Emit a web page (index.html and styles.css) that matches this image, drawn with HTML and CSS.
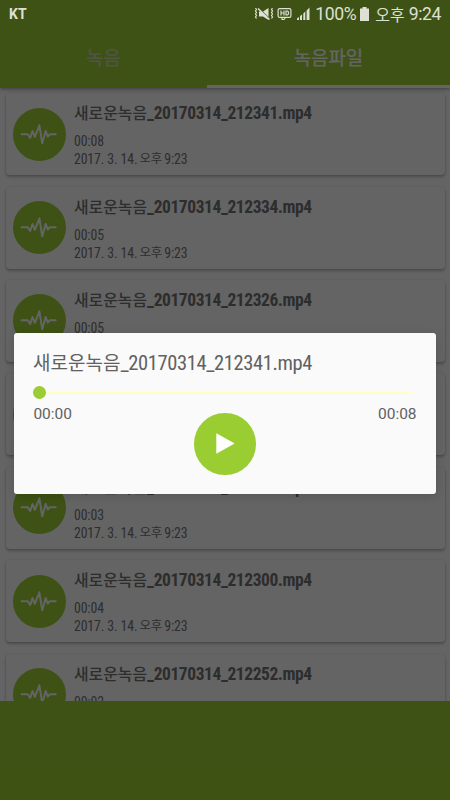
FILE: index.html
```
<!DOCTYPE html>
<html lang="ko">
<head>
<meta charset="utf-8">
<meta name="viewport" content="width=device-width">
<title>녹음파일</title>
<link rel="stylesheet" href="styles.css">
</head>
<body>
<svg class="defs" aria-hidden="true">
  <symbol id="wave" viewBox="0 0 53 53"><path d="M8.500 26.300h6.200l2.500 3.700 2.300-7 2.300 5.800 4.600-11.500 2.800 18 3.500-12.300 2 5.500 2.200-2.200h5.800" fill="none" stroke="currentColor" stroke-width="2" stroke-linejoin="round" stroke-linecap="round"/></symbol>
</svg>
<div class="screen">
  <header class="header">
    <nav class="tabs">
      <div class="tab">녹음</div>
      <div class="tab active">녹음파일</div>
    </nav>
  </header>
  <main class="list">
    <article class="card"><div class="disc"><svg><use href="#wave"/></svg></div><div class="info"><h2>새로운녹음<span class="latin">_20170314_212341.mp4</span></h2><p class="time"><span class="latin">00:08</span></p><p class="date"><span class="latin">2017. 3. 14.</span><span class="ko">오후</span><span class="latin">9:23</span></p></div></article>
    <article class="card"><div class="disc"><svg><use href="#wave"/></svg></div><div class="info"><h2>새로운녹음<span class="latin">_20170314_212334.mp4</span></h2><p class="time"><span class="latin">00:05</span></p><p class="date"><span class="latin">2017. 3. 14.</span><span class="ko">오후</span><span class="latin">9:23</span></p></div></article>
    <article class="card"><div class="disc"><svg><use href="#wave"/></svg></div><div class="info"><h2>새로운녹음<span class="latin">_20170314_212326.mp4</span></h2><p class="time"><span class="latin">00:05</span></p></div></article>
    <article class="card"><div class="disc"><svg><use href="#wave"/></svg></div><div class="info"></div></article>
    <article class="card"><div class="disc"><svg><use href="#wave"/></svg></div><div class="info"><h2>새로운녹음<span class="latin">_20170314_212309.mp4</span></h2><p class="time"><span class="latin">00:03</span></p><p class="date"><span class="latin">2017. 3. 14.</span><span class="ko">오후</span><span class="latin">9:23</span></p></div></article>
    <article class="card"><div class="disc"><svg><use href="#wave"/></svg></div><div class="info"><h2>새로운녹음<span class="latin">_20170314_212300.mp4</span></h2><p class="time"><span class="latin">00:04</span></p><p class="date"><span class="latin">2017. 3. 14.</span><span class="ko">오후</span><span class="latin">9:23</span></p></div></article>
    <article class="card"><div class="disc"><svg><use href="#wave"/></svg></div><div class="info"><h2>새로운녹음<span class="latin">_20170314_212252.mp4</span></h2><p class="time"><span class="latin">00:02</span></p></div></article>
  </main>
  <footer class="footer"></footer>
</div>
<div class="scrim"></div>
<div class="status">
  <span class="carrier">KT</span>
  <svg class="icons" viewBox="0 0 58 16">
    <g fill="none" stroke="currentColor" stroke-width="1.200">
      <path d="M1.500 2l1 1.500-1 1.500 1 1.500-1 1.500 1 1.500-1 1.500 1 1.500M18.500 2l-1 1.500 1 1.500-1 1.500 1 1.500-1 1.500 1 1.500-1 1.500"/>
      <path d="M4 2.500l11.500 11" stroke-width="1.500"/>
      <rect x="24.100" y="2.600" width="12.800" height="8.800" rx="1.500"/>
      <path d="M27 4.500v5M27 7h3M30 4.500v5M32 5v4h1.500l1-1V6l-1-1z"/>
      <path d="M28 11.500v2h2l1.500-2"/>
    </g>
    <path d="M5 5.500h2.500l7 7v1.500L9 10.500H5zM9 5.500L14.500 2v9z" fill="currentColor"/>
    <path d="M43 14v-1.500l2-1.500v3zM46 14v-4l2-1.500V14zM49.300 14V7.500l2-2V14zM52.600 14V4.500L55.500 1.500V14z" fill="currentColor"/>
  </svg>
  <span class="percent">100%</span>
  <svg class="battery" viewBox="0 0 9 14"><path d="M2.500 0h4v1.500H9V14H0V1.500h2.500z" fill="currentColor"/></svg>
  <span class="meridiem">오후</span>
  <span class="clock">9:24</span>
</div>
<section class="dialog">
  <h1>새로운녹음<span class="latin">_20170314_212341.mp4</span></h1>
  <div class="seek"><span class="thumb"></span><span class="track"></span></div>
  <div class="times"><span>00:00</span><span>00:08</span></div>
  <button class="play" aria-label="재생"><svg viewBox="0 0 62 62"><path d="M22.500 20.500v20.500L41 30.800z" fill="#fff"/></svg></button>
</section>
</body>
</html>
```
FILE: styles.css
```
* { box-sizing: border-box; margin: 0; padding: 0; }
body { position: relative; width: 450px; height: 800px; overflow: hidden; background: #fafafa; font-family: Roboto, "Noto Sans CJK KR", sans-serif; }
.defs { position: absolute; width: 0; height: 0; }
.screen { display: flex; flex-direction: column; height: 800px; }
.header { position: relative; height: 88px; flex: none; padding-top: 28px; background: #9acd32; box-shadow: 0 1px 4px rgba(0,0,0,.4); }
.tabs { display: flex; height: 60px; }
.tab { width: 207px; padding-bottom: 3px; display: flex; align-items: center; justify-content: center; font-size: 18.900px; font-weight: 500; color: #c6d4a8; }
.tab.active { width: 243px; padding: 0; color: #fafafa; border-bottom: 3px solid #fafafa; }
.list { flex: 1; min-height: 0; overflow: hidden; padding: 5.200px 5.500px 0 6px; display: flex; flex-direction: column; gap: 11.400px; }
.card { flex: none; height: 82px; display: flex; padding: 14.500px 0 0 7.300px; border-radius: 4px; background: #fafafa; box-shadow: 0 2px 3px rgba(0,0,0,.25), 0 0 2px rgba(0,0,0,.12); }
.disc { width: 53px; height: 53px; border-radius: 50%; background: #9acd32; color: #fafafa; flex: none; }
.disc svg { display: block; width: 53px; height: 53px; }
.info { margin-left: 7.700px; margin-top: -14.500px; color: #737373; white-space: nowrap; }
.latin { font-family: "Roboto Condensed", Roboto, sans-serif; font-stretch: 75%; }
.card h2 { height: 39px; padding-top: 8px; line-height: 24px; font-size: 15.900px; font-weight: 500; color: #707070; }
.card h2 .latin { font-size: 17.500px; font-weight: 700; letter-spacing: -.44px; }
.time, .date { display: flex; height: 18px; line-height: 18px; font-size: 13.800px; letter-spacing: -.12px; }
.date { gap: 2px; }
.date .ko { font-size: 12.500px; }
.footer { height: 99px; flex: none; background: #9acd32; }
.scrim { position: absolute; inset: 0; background: rgba(0,0,0,.6); }
.status { position: absolute; inset: 0 0 auto; height: 28px; display: flex; align-items: center; padding: 0 9px; color: #dde0d3; font-size: 17.600px; letter-spacing: -.4px; }
.carrier { margin-right: auto; font-size: 14px; font-weight: 700; letter-spacing: 0; }
.icons { width: 58px; height: 16px; margin-right: 3px; }
.battery { width: 9px; height: 14px; margin: 0 6px 0 4px; }
.meridiem { font-size: 16px; margin-right: 4px; letter-spacing: 0; }
.dialog { position: absolute; left: 14.400px; top: 333px; width: 421.200px; height: 160.600px; padding: 16px 19px 0; border-radius: 3px; background: #fafafa; color: #616161; box-shadow: 0 2px 10px rgba(0,0,0,.15); }
.dialog h1 { height: 37px; margin-left: -.4px; line-height: 29px; font-size: 19px; font-weight: 400; white-space: nowrap; }
.dialog h1 .latin { font-size: 20.500px; letter-spacing: -.39px; }
.seek { display: flex; align-items: center; height: 13px; margin-right: 6px; }
.thumb { width: 13px; height: 13px; border-radius: 50%; background: #9acd32; }
.track { flex: 1; height: 2px; background: #ffffc0; }
.times { display: flex; justify-content: space-between; height: 14px; margin-top: 5px; line-height: 20px; font-size: 15.500px; }
.play { display: block; width: 61.500px; height: 61.500px; margin: -5px auto 0; border: 0; border-radius: 50%; background: #9acd32; }
.play svg { display: block; width: 61.500px; height: 61.500px; }
```
